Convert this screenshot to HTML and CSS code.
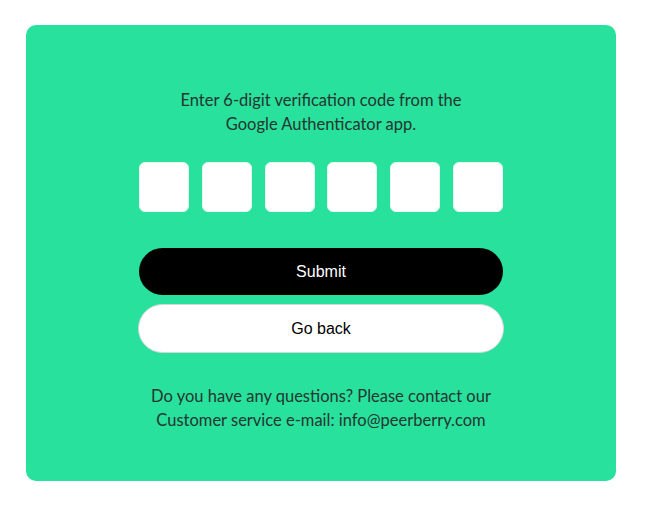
FILE: index.html
```html
<!DOCTYPE html>
<html>
<head>
<meta charset="utf-8">
<link rel="stylesheet" href="styles.css">
</head>
<body>
<div class="card">
  <p class="intro">Enter 6-digit verification code from the<br>Google Authenticator app.</p>
  <div class="codes">
    <input class="code" maxlength="1">
    <input class="code" maxlength="1">
    <input class="code" maxlength="1">
    <input class="code" maxlength="1">
    <input class="code" maxlength="1">
    <input class="code" maxlength="1">
  </div>
  <button class="btn btn-submit">Submit</button>
  <button class="btn btn-back">Go back</button>
  <p class="help">Do you have any questions? Please contact our<br>Customer service e-mail: info@peerberry.com</p>
</div>
</body>
</html>
```
FILE: styles.css
```css
html, body { margin: 0; padding: 0; background: #fff; }
.card {
  box-sizing: border-box;
  margin: 25px 0 0 26px;
  width: 590px;
  height: 456px;
  background: #27e19d;
  border-radius: 10px;
  padding-top: 63px;
  display: flex;
  flex-direction: column;
  align-items: center;
}
.intro, .help {
  margin: 0;
  font-family: "Lato", sans-serif;
  font-size: 16.5px;
  line-height: 24px;
  color: #26352f;
  text-align: center;
}
.codes {
  display: flex;
  gap: 12.8px;
  margin-top: 26px;
}
.code {
  box-sizing: border-box;
  width: 50px;
  height: 50px;
  border: 1px solid #e6f7ef;
  border-radius: 6px;
  background: #fff;
  padding: 0;
  outline: none;
}
.btn {
  box-sizing: border-box;
  font-family: "Liberation Sans", Arial, sans-serif;
  font-size: 16px;
  border-radius: 25px;
  cursor: pointer;
}
.btn-submit {
  margin-top: 36px;
  width: 364px;
  height: 47px;
  background: #000;
  color: #fff;
  border: none;
}
.btn-back {
  margin-top: 9px;
  width: 366px;
  height: 49px;
  background: #fff;
  color: #000;
  border: 1px solid #d6d6d6;
}
.help { margin-top: 31px; }
```
